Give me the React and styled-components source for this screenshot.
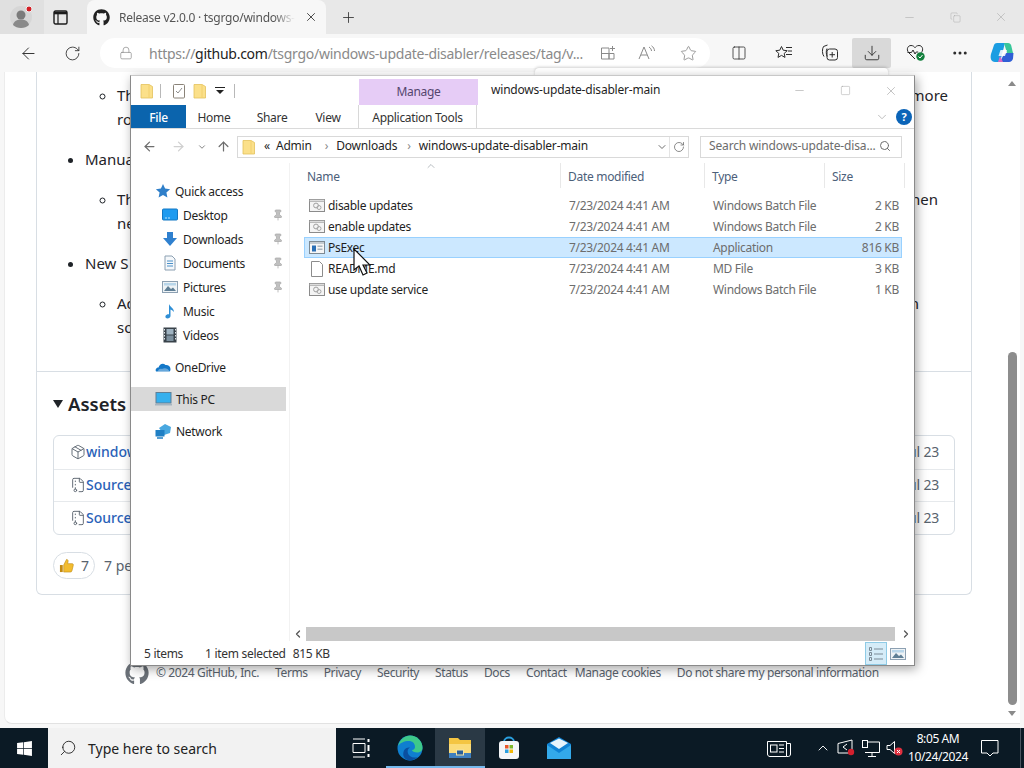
import React from "react";
import styled, { createGlobalStyle } from "styled-components";
import { FaGithub, FaWindows } from "react-icons/fa";
import {
  ArrowLeft,
  ArrowRight,
  ArrowUp,
  ChevronDown,
  ChevronLeft,
  ChevronRight,
  ChevronUp,
  Columns2,
  Lock,
  Minus,
  MoreHorizontal,
  Pin,
  Plus,
  RotateCw,
  Search,
  Square,
  Star,
  X,
  Copy,
  Download,
  Package,
  FileArchive,
} from "lucide-react";

const UI_FONT = `"Noto Sans", "Open Sans", sans-serif`;

const GlobalStyle = createGlobalStyle`
  html, body { margin: 0; padding: 0; background: #f7f7f7; }
  * { box-sizing: border-box; }
  body { font-family: ${UI_FONT}; overflow: hidden; }
`;

/* ---------- drawn icons ---------- */

const FolderIcon = ({ size = 16 }) => (
  <svg width={size} height={size} viewBox="0 0 16 16">
    <path d="M2 1.5h8l3.5 2V15H2z" fill="#fbe08a" stroke="#e3c25c" strokeWidth="0.8" />
    <path d="M10 1.5V15" stroke="#f2d06e" strokeWidth="1" />
  </svg>
);

const CheckDocIcon = () => (
  <svg width="16" height="16" viewBox="0 0 16 16" fill="none">
    <rect x="2.5" y="1.5" width="11" height="13.5" rx="1" stroke="#8a8378" />
    <path d="M5 8l2 2 4-5" stroke="#8f8f8f" />
  </svg>
);

const BatchIcon = () => (
  <svg width="16" height="13" viewBox="0 0 16 13" fill="none">
    <rect x="0.5" y="0.5" width="15" height="12" fill="#f4f4f4" stroke="#8b8b8b" />
    <rect x="0.5" y="0.5" width="15" height="2" fill="#dcdcdc" stroke="#8b8b8b" strokeWidth="0.5" />
    <circle cx="7" cy="6.5" r="2.4" stroke="#a0a0a0" />
    <circle cx="10" cy="8.5" r="2" stroke="#a8a8a8" />
  </svg>
);

const AppIcon = () => (
  <svg width="16" height="13" viewBox="0 0 16 13">
    <rect x="0.5" y="0.5" width="15" height="12" fill="#f6f6f6" stroke="#7d8a94" />
    <rect x="1" y="1" width="14" height="2" fill="#c4ccd2" />
    <rect x="3" y="4.5" width="4" height="6" fill="#2a6fb5" />
    <rect x="8.5" y="4.5" width="5" height="1.5" fill="#a9b6c0" />
    <rect x="8.5" y="7.5" width="5" height="1.5" fill="#a9b6c0" />
  </svg>
);

const PageIcon = () => (
  <svg width="14" height="16" viewBox="0 0 14 16" fill="#fff" stroke="#8c8c8c">
    <path d="M1.5.5h8l3 3v12h-11z" />
  </svg>
);

const QuickAccessIcon = () => (
  <svg width="16" height="16" viewBox="0 0 16 16">
    <path d="M8 1l2.1 4.6 5 .6-3.7 3.4 1 5L8 12.100l-4.400 2.500 1-5L.9 6.200l5-.6z" fill="#2f7fc9" />
  </svg>
);

const DesktopIcon = () => (
  <svg width="16" height="16" viewBox="0 0 16 16">
    <rect x="0.5" y="2" width="15" height="11" rx="1" fill="#1e9bf0" stroke="#1378c4" />
    <path d="M3 11h2m1 0h2" stroke="#bfe4fb" />
  </svg>
);

const DownloadsIcon = () => (
  <svg width="16" height="16" viewBox="0 0 16 16">
    <path d="M5 1h6v6h4l-7 8-7-8h4z" fill="#2f80cf" />
  </svg>
);

const DocumentsIcon = () => (
  <svg width="16" height="16" viewBox="0 0 16 16" fill="none">
    <path d="M3 1h7l3 3v11H3z" fill="#f5f8fb" stroke="#8ca0b2" />
    <path d="M5 6h6M5 8.500h6M5 11h6" stroke="#4a90c8" />
  </svg>
);

const PicturesIcon = () => (
  <svg width="16" height="16" viewBox="0 0 16 16">
    <rect x="0.5" y="2.500" width="15" height="11" fill="#eef3f6" stroke="#8ca0b2" />
    <path d="M2 12l4-5 3 3 2-1.500 3 3.500z" fill="#5f7f96" />
    <rect x="2" y="4" width="12" height="2.500" fill="#b8d6ea" />
  </svg>
);

const MusicIcon = () => (
  <svg width="16" height="16" viewBox="0 0 16 16">
    <path d="M7 1c1 3 5 4 5 8-1-1-2-2-3.500-2.500V13c0 1.600-1.500 2.500-3 2.500S3 14.500 3.500 13 6 11 7 11.300z" fill="#2f8fd6" />
  </svg>
);

const VideosIcon = () => (
  <svg width="16" height="16" viewBox="0 0 16 16">
    <rect x="1.500" y="0.500" width="13" height="15" fill="#39424a" />
    <rect x="4.500" y="2" width="7" height="5.500" fill="#9fb3c1" />
    <rect x="4.500" y="8.500" width="7" height="5.500" fill="#7d909e" />
    <path d="M2.500 2v12M13.500 2v12" stroke="#dfe5e9" strokeDasharray="1.500 1.500" />
  </svg>
);

const OneDriveIcon = () => (
  <svg width="16" height="16" viewBox="0 0 16 16">
    <path d="M1 12.500c-1-2 .5-4 2.500-4C4.500 5 8 3.500 10.500 6c2-.5 5 1 5 4 0 1.500-.5 2.500-1 2.500z" fill="#1478c8" />
    <path d="M3 12.500c0-2 2-3.500 4-2.500 1.500-1 6-1.500 7.500 2.500z" fill="#fff" opacity="0.35" />
  </svg>
);

const ThisPcIcon = () => (
  <svg width="17" height="16" viewBox="0 0 17 16">
    <rect x="1" y="1.500" width="15" height="10.500" fill="#35b0ee" stroke="#5f7f96" />
    <path d="M0 13h17v1.500H0z" fill="#a6b4bf" />
  </svg>
);

const NetworkIcon = () => (
  <svg width="17" height="16" viewBox="0 0 17 16">
    <path d="M4 5l6-4 6 3-1 6-6 2z" fill="#49a8e0" />
    <rect x="0.500" y="7" width="9" height="6.500" fill="#1f7fc4" />
    <path d="M2 15h6" stroke="#1f7fc4" strokeWidth="1.500" />
  </svg>
);

const NAV_ICONS = {
  quick: QuickAccessIcon,
  desktop: DesktopIcon,
  downloads: DownloadsIcon,
  documents: DocumentsIcon,
  pictures: PicturesIcon,
  music: MusicIcon,
  videos: VideosIcon,
  onedrive: OneDriveIcon,
  pc: ThisPcIcon,
  network: NetworkIcon,
};

const FILE_ICONS = { batch: BatchIcon, app: AppIcon, page: PageIcon };

const ThumbIcon = () => (
  <svg width="15" height="15" viewBox="0 0 16 16">
    <path d="M1 7.500h3V15H1z" fill="#c28a12" />
    <path d="M5 7.500L8 1.500c1.600 0 2 1.200 1.600 2.700L9.200 6H14c1.200 0 1.500 1 1.200 2l-1.400 5.700c-.2.900-.8 1.300-1.700 1.300H5z" fill="#f2bc2f" stroke="#b9860f" strokeWidth="0.600" />
  </svg>
);

const ProfileIcon = () => (
  <svg width="24" height="26" viewBox="0 0 24 26">
    <circle cx="11" cy="13" r="11" fill="#d6d6d6" />
    <circle cx="11" cy="11" r="4.500" fill="#7b7b7b" />
    <path d="M3 21c1-4 4-5.500 8-5.500s7 1.500 8 5.500c-2 2-5 3-8 3s-6-1-8-3z" fill="#8a8a8a" />
    <circle cx="19" cy="5" r="3" fill="#d41f26" stroke="#f0f0f0" />
  </svg>
);

const TabActionsIcon = () => (
  <svg width="15" height="15" viewBox="0 0 15 15" fill="none" stroke="#1c1c1c">
    <rect x="1" y="1" width="13" height="13" rx="1.500" strokeWidth="1.400" />
    <path d="M1 3h13" strokeWidth="2.600" />
    <path d="M5 4v10" strokeWidth="1.200" />
  </svg>
);

const SplitAddIcon = () => (
  <svg width="16" height="16" viewBox="0 0 16 16" fill="none" stroke="#8a8a8a">
    <path d="M1.500 3h7.500v11h-7.500zM9 8.500H1.500M9 8.500h5V14H9z" />
    <path d="M12.500 1v5M10 3.500h5" />
  </svg>
);

const ReadAloudIcon = () => (
  <svg width="20" height="16" viewBox="0 0 20 16" fill="none" stroke="#8a8a8a">
    <path d="M1 14L6 2l5 12M3 10h6" />
    <path d="M11 2c1.500 1 2.500 2.500 2.500 4M13.500 .800c1.800 1.200 3 3 3 5.200" />
  </svg>
);

const FavoritesIcon = () => (
  <svg width="18" height="16" viewBox="0 0 18 16" fill="none" stroke="#2c2c2c">
    <path d="M6.500 1.500l1.700 3.700 4 .5-3 2.700.8 4-3.500-2-3.500 2 .8-4-3-2.700 4-.5z" />
    <path d="M11 2.500h6M13 6h4M11 9.500h6" />
  </svg>
);

const CollectionsIcon = () => (
  <svg width="18" height="18" viewBox="0 0 18 18" fill="none" stroke="#2c2c2c">
    <path d="M3 12.500C1 10 1 5 2.500 2.500l4-1.500M6 4.500c-1 2-1 6 .200 8" />
    <rect x="6" y="5" width="10.500" height="11" rx="2.500" />
    <path d="M11.200 8v5.500M8.500 10.700H14" />
  </svg>
);

const HealthIcon = () => (
  <svg width="20" height="18" viewBox="0 0 20 18" fill="none">
    <path d="M9 15L2.500 8.500C0 5 2 1.500 5 1.500c2 0 3.200 1 4 2.200.8-1.200 2-2.200 4-2.200 3 0 5 3.500 2.500 7" stroke="#2c2c2c" />
    <path d="M1.500 8.500h4L7 6l2 4 1.200-2h2" stroke="#2c2c2c" />
    <circle cx="14.500" cy="12.500" r="4.200" fill="#13803d" />
    <path d="M12.500 12.500l1.500 1.500 2.500-3" stroke="#fff" />
  </svg>
);

const CopilotIcon = () => (
  <svg width="24" height="24" viewBox="0 0 24 24">
    <path d="M7 2h8l-5 19H5C1 21 0 17 1 13L4 4c.4-1.300 1.600-2 3-2z" fill="#1b9de2" />
    <path d="M14 2h4c1.700 0 2.800 1 3.200 2.500L23 12h-6z" fill="#38c79a" />
    <path d="M10 21h9c2 0 3.500-1.300 4-3.500L23.500 12H17c-2 0-3.300 1.200-4 3z" fill="#2f5fd6" />
    <path d="M8 21l2-6 3 6z" fill="#d96ac4" />
    <path d="M10.500 9H17l-2 6H8.500z" fill="#fff" opacity="0.85" />
  </svg>
);

const TaskViewIcon = () => (
  <svg width="20" height="20" viewBox="0 0 20 20" fill="none" stroke="#fff">
    <path d="M2 1h12M2 19h12M2 5.500h12v9H2z" />
    <path d="M17.500 1v3M17.500 7v6M17.500 16v3" strokeWidth="2" />
  </svg>
);

const EdgeIcon = () => (
  <svg width="26" height="26" viewBox="0 0 26 26">
    <circle cx="13" cy="13" r="12.500" fill="#0f7fd0" />
    <path d="M1 11C3 4 8 .5 13 .5 20 .5 25.500 6 25.500 13c0 3-2.500 4.500-5.500 4.500-2.500 0-5-1-5-2.500 2 0 3-1.500 3-3C18 8 15 6 12 6 7 6 3 8 1 11z" fill="#3ec98a" />
    <path d="M12.500 25.500C7 25 5 20 7 15.500c1-2.500 4-3.500 6-3 -2 1-3 3-2 6 1 3 5 5 9.500 3.500-2 2.300-5 3.500-8 3.500z" fill="#0a4fa0" />
  </svg>
);

const ExplorerIcon = () => (
  <svg width="24" height="22" viewBox="0 0 24 22">
    <path d="M1 1h9l2 2h11v17H1z" fill="#f4c542" />
    <rect x="1" y="7" width="22" height="14" fill="#fbdc7a" />
    <rect x="1" y="16" width="22" height="5" fill="#3f7fbf" />
    <rect x="8.500" y="13" width="7" height="5" fill="#2a5f9a" stroke="#f6e3a1" />
  </svg>
);

const StoreIcon = () => (
  <svg width="24" height="24" viewBox="0 0 24 24">
    <path d="M7 6c0-6 10-6 10 0" fill="none" stroke="#2aa0e0" strokeWidth="1.800" />
    <rect x="2" y="5" width="20" height="18" rx="3" fill="#f4f6f8" />
    <rect x="8" y="9" width="3.500" height="3.500" fill="#e8562a" />
    <rect x="12.500" y="9" width="3.500" height="3.500" fill="#7eb82b" />
    <rect x="8" y="13.500" width="3.500" height="3.500" fill="#2b9fe0" />
    <rect x="12.500" y="13.500" width="3.500" height="3.500" fill="#f2b705" />
  </svg>
);

const MailIcon = () => (
  <svg width="26" height="24" viewBox="0 0 26 24">
    <path d="M1 8L13 1l12 7v15H1z" fill="#0f82d4" />
    <path d="M1 9l12 8 12-8v14H1z" fill="#33a9ea" />
    <path d="M4 7l9-4.500L22 7l-9 6z" fill="#e6f4fc" />
  </svg>
);

const NewsIcon = () => (
  <svg width="24" height="18" viewBox="0 0 24 18" fill="none" stroke="#fff">
    <path d="M.5 2.500h19v15H3c-1.500 0-2.500-1-2.500-2.500z" />
    <path d="M19.500 4.500h4V15c0 1.500-1 2.500-2 2.500h-2" />
    <rect x="3.500" y="6" width="6.500" height="7" />
    <path d="M12 6h5M12 9.500h5M12 13h5" />
  </svg>
);

const RemoteIcon = () => (
  <svg width="20" height="18" viewBox="0 0 20 18" fill="none" stroke="#fff">
    <path d="M1 4.500l14-3.500v13H1z" />
    <path d="M10 5L6 8l4 3" />
    <circle cx="14" cy="13" r="3.200" fill="#d3202e" stroke="none" />
  </svg>
);

const NetworkTrayIcon = () => (
  <svg width="18" height="17" viewBox="0 0 18 17" fill="none" stroke="#fff">
    <path d="M4 2h13.500v10.500H3" />
    <rect x=".5" y=".5" width="5" height="7" fill="#0b1a25" />
    <path d="M10 12.500v3.500M6 16.500h8" />
  </svg>
);

const VolumeIcon = () => (
  <svg width="18" height="17" viewBox="0 0 18 17" fill="none" stroke="#fff">
    <path d="M1 5.500h3L8.500 1.500v12L4 9.500H1z" />
    <circle cx="12.500" cy="11.500" r="4" fill="#e0303f" stroke="none" />
    <path d="M11 10l3 3m0-3l-3 3" stroke="#fff" />
  </svg>
);

const BubbleIcon = () => (
  <svg width="18" height="17" viewBox="0 0 18 17" fill="none" stroke="#fff">
    <path d="M.5.5h16.500v12.500h-5l-3 3-3-3H.5z" />
  </svg>
);

const DetailsViewIcon = () => (
  <svg width="16" height="16" viewBox="0 0 16 16" stroke="#7b8a96" strokeWidth="1" fill="none">
    <path d="M1.500 1.500h2v3h-2zM1.500 6.500h2v3h-2zM1.500 11.500h2v3h-2zM6 3h9M6 8h9M6 13h9" />
  </svg>
);

const Cursor = styled.svg`
  position: absolute;
  left: 353px;
  top: 248px;
  z-index: 5;
`;

/* ---------- browser chrome ---------- */

const Shell = styled.div`
  position: relative;
  width: 1024px;
  height: 768px;
  display: flex;
  flex-direction: column;
  overflow: hidden;
  background: #f7f7f7;
`;

const TabStrip = styled.div`
  height: 34px;
  flex: none;
  display: flex;
  align-items: stretch;
  background: #e8e8e8;
`;

const ProfileSlot = styled.div`
  width: 44px;
  display: flex;
  align-items: center;
  justify-content: center;
  background: #e0e0e0;
`;

const TabActions = styled.div`
  width: 43px;
  display: flex;
  align-items: center;
  padding-left: 9px;
`;

const Tab = styled.div`
  width: 239px;
  display: flex;
  align-items: center;
  padding: 0 8px 0 6px;
  gap: 9px;
  background: #f7f7f7;
  border-radius: 8px 8px 0 0;
  color: #333;
`;

const TabTitle = styled.span`
  flex: 1;
  min-width: 0;
  white-space: nowrap;
  font-size: 12px;
  letter-spacing: -0.25px;
  color: #555;
  -webkit-mask-image: linear-gradient(to right, #000 88%, transparent);
  mask-image: linear-gradient(to right, #000 88%, transparent);
`;

const NewTab = styled.div`
  width: 44px;
  display: flex;
  align-items: center;
  justify-content: center;
  color: #333;
`;

const BrowserControls = styled.div`
  margin-left: auto;
  display: flex;
`;

const BrowserControl = styled.div`
  width: 46px;
  display: flex;
  align-items: center;
  justify-content: center;
  color: #a8a8a8;
`;

const Toolbar = styled.div`
  height: 38px;
  flex: none;
  display: flex;
  align-items: center;
  background: #f7f7f7;
`;

const ToolButton = styled.div`
  width: ${(p) => p.$w || 44}px;
  height: 30px;
  flex: none;
  display: flex;
  align-items: center;
  justify-content: center;
  color: ${(p) => p.$color || "#2c2c2c"};
  background: ${(p) => (p.$active ? "#d9d9d9" : "transparent")};
  border-radius: 2px;
`;

const AddressBar = styled.div`
  width: 610px;
  height: 30px;
  flex: none;
  margin-left: 12px;
  display: flex;
  align-items: center;
  padding-left: 19px;
  background: #fff;
  border-radius: 15px;
  color: #8a8a8a;
`;

const Url = styled.span`
  width: 430px;
  margin-left: 16px;
  font-size: 14px;
  letter-spacing: -0.27px;
  color: #8a8a8a;
  white-space: nowrap;

  b {
    font-weight: 400;
    color: #222;
  }
`;

const AddressActions = styled.div`
  margin-left: 9px;
  display: flex;
`;

const ToolGroup = styled.div`
  margin-left: 7px;
  display: flex;
`;

const DownloadPopup = styled.div`
  position: absolute;
  left: 535px;
  top: 68px;
  width: 353px;
  height: 10px;
  background: #fff;
  border-radius: 4px 4px 0 0;
  box-shadow: 0 -1px 3px rgba(0, 0, 0, 0.18);
`;

/* ---------- page behind the window ---------- */

const PageFrame = styled.div`
  flex: 1;
  min-height: 0;
  margin: 0 4px 4px;
  display: flex;
  background: #fff;
  border-bottom: 1px solid #e2e2e2;
  border-left: 1px solid #ececec;
  border-radius: 0 0 0 8px;
`;

const PageBody = styled.div`
  flex: 1;
  min-width: 0;
  overflow: hidden;
  padding-left: 31px;
`;

const Card = styled.div`
  width: 936px;
  height: 523px;
  margin-bottom: 66px;
  border: 1px solid #d8dee4;
  border-top: none;
  border-radius: 0 0 6px 6px;
  padding-top: 11px;
  font-size: 15px;
  line-height: 24px;
  color: #1f2328;
`;

const List = styled.ul`
  margin: 0;
  padding-left: ${(p) => (p.$nested ? 32 : 48)}px;
  list-style: ${(p) => (p.$nested ? "circle" : "disc")};
`;

const Bullet = styled.li`
  margin-top: ${(p) => (p.$first ? 0 : 16)}px;
  list-style: ${(p) => (p.$plain ? "none" : "inherit")};
`;

const Line = styled.div`
  width: ${(p) => p.$width}px;
  display: flex;
  justify-content: space-between;
`;

const Divider = styled.hr`
  height: 1px;
  margin: 32px 0 0;
  border: none;
  background: #d8dee4;
`;

const Section = styled.div`
  padding: 19px 16px 0;
`;

const SectionTitle = styled.h2`
  margin: 0;
  display: flex;
  align-items: center;
  gap: 5px;
  font-size: 18.5px;
  line-height: 26px;
  font-weight: 600;
  color: #1f2328;

  &::before {
    content: "";
    border-left: 5px solid transparent;
    border-right: 5px solid transparent;
    border-top: 8px solid #1f2328;
  }
`;

const AssetBox = styled.div`
  margin-top: 18px;
  height: 100px;
  display: grid;
  grid-template-rows: repeat(3, 1fr);
  border: 1px solid #d8dee4;
  border-radius: 6px;
`;

const AssetRow = styled.div`
  display: flex;
  align-items: center;
  justify-content: space-between;
  padding: 0 15px 0 16px;
  border-top: ${(p) => (p.$first ? "none" : "1px solid #e6e9ec")};
`;

const AssetName = styled.span`
  display: flex;
  align-items: center;
  font-size: 14px;
  font-weight: 500;
  color: #2a62b8;

  svg {
    color: #59636e;
  }
`;

const AssetDate = styled.span`
  font-size: 14px;
  letter-spacing: -0.2px;
  color: #59636e;
`;

const ReactionRow = styled.div`
  margin-top: 17px;
  display: flex;
  align-items: center;
  gap: 9px;
  font-size: 14px;
  color: #59636e;
`;

const ReactionPill = styled.span`
  width: 42px;
  height: 27px;
  display: flex;
  align-items: center;
  gap: 7px;
  padding-left: 5px;
  border: 1px solid #d8dee4;
  border-radius: 14px;
`;

const Footer = styled.div`
  display: flex;
  align-items: center;
  height: 24px;
  margin-left: 89px;
  font-size: 12px;
  letter-spacing: -0.38px;
  line-height: 16px;
  color: #59636e;
  white-space: nowrap;
`;

const FooterLogo = styled.span`
  width: 31px;
  display: flex;
  color: #6b7178;
`;

const Spaced = styled.span`
  margin-left: ${(p) => p.$gap ?? 16}px;
`;

const PageScroll = styled.div`
  width: 16px;
  flex: none;
  display: flex;
  flex-direction: column;
  align-items: center;
  padding-top: 9px;
  color: #8a8a8a;
`;

const ScrollThumb = styled.div`
  flex: 1;
  width: 9px;
  margin-top: 266px;
  margin-bottom: 6px;
  background: #8d8d8d;
  border-radius: 5px;
`;

const Arrow = styled.span`
  width: 0;
  height: 0;
  border-left: 4px solid transparent;
  border-right: 4px solid transparent;
  border-bottom: ${(p) => (p.$down ? "none" : "5px solid #8a8a8a")};
  border-top: ${(p) => (p.$down ? "5px solid #8a8a8a" : "none")};
  margin-bottom: ${(p) => (p.$down ? 7 : 0)}px;
`;

/* ---------- explorer window ---------- */

const Window = styled.div`
  position: absolute;
  left: 130px;
  top: 75px;
  width: 785px;
  height: 591px;
  display: flex;
  flex-direction: column;
  background: #fff;
  border: 1px solid #8a8a8a;
  border-top-color: #c8c8c8;
  box-shadow: 2px 3px 10px rgba(0, 0, 0, 0.35);
  font-size: 12px;
  color: #1f1f1f;
  letter-spacing: -0.3px;
`;

const TitleRow = styled.div`
  height: 29px;
  flex: none;
  display: flex;
  align-items: flex-end;
`;

const QuickBar = styled.div`
  width: 228px;
  height: 29px;
  display: flex;
  align-items: center;
  padding-left: 8px;
  gap: 5px;
`;

const QuickSep = styled.span`
  width: 1px;
  height: 14px;
  margin-right: ${(p) => p.$mr || 0}px;
  background: #b8b8b8;
`;

const QuickDrop = styled.span`
  width: 10px;
  height: 8px;
  border-top: 1px solid #222;
  position: relative;
  margin: 0 4px 0 2px;

  &::after {
    content: "";
    position: absolute;
    left: 1px;
    top: 2px;
    border-left: 4px solid transparent;
    border-right: 4px solid transparent;
    border-top: 4px solid #222;
  }
`;

const ManageTab = styled.div`
  width: 119px;
  height: 26px;
  padding-bottom: 2px;
  display: flex;
  align-items: center;
  justify-content: center;
  background: #e6ccf6;
  color: #54466e;
`;

const WindowTitle = styled.div`
  margin-left: 13px;
  height: 29px;
  line-height: 27px;
  letter-spacing: -0.2px;
`;

const WindowControls = styled.div`
  margin-left: auto;
  height: 29px;
  display: flex;
`;

const WindowControl = styled.div`
  width: 46px;
  display: flex;
  align-items: center;
  justify-content: center;
  color: #9a9a9a;
`;

const RibbonRow = styled.div`
  height: 24px;
  flex: none;
  display: flex;
  align-items: stretch;
  border-bottom: 1px solid #dadada;
`;

const RibbonTab = styled.div`
  width: ${(p) => p.$w}px;
  padding-top: 2px;
  display: flex;
  align-items: center;
  justify-content: center;
  color: #333;
`;

const FileTab = styled(RibbonTab)`
  background: #0b64ad;
  color: #fff;
  font-weight: 500;
`;

const ContextTab = styled(RibbonTab)`
  margin-left: 4px;
  border-left: 1px solid #d8d8d8;
  border-right: 1px solid #d8d8d8;
`;

const RibbonEnd = styled.div`
  margin-left: auto;
  display: flex;
  align-items: center;
  gap: 7px;
  padding-right: 2px;
  color: #b0b0b0;
`;

const HelpBadge = styled.span`
  width: 16px;
  height: 16px;
  display: flex;
  align-items: center;
  justify-content: center;
  border-radius: 50%;
  background: #0b64b8;
  color: #fff;
  font-size: 11px;
  font-weight: 700;
`;

const AddressRow = styled.div`
  height: 34px;
  flex: none;
  display: flex;
  align-items: center;
  padding-top: 1px;
`;

const NavArrows = styled.div`
  width: 106px;
  display: grid;
  grid-template-columns: 36px 22px 26px 16px;
  justify-items: center;
  align-items: center;
`;

const NavArrow = styled.span`
  display: flex;
  color: ${(p) => (p.$off ? "#d0d0d0" : "#6e6e6e")};
`;

const PathBox = styled.div`
  width: 452px;
  height: 22px;
  display: flex;
  align-items: center;
  padding-left: 3px;
  border: 1px solid #d9d9d9;
`;

const Crumb = styled.span`
  margin-left: ${(p) => p.$ml}px;
  padding-bottom: 2px;
  white-space: nowrap;
  letter-spacing: -0.2px;
`;

const Sep = styled(Crumb)`
  color: #8a8a8a;
`;

const PathEnd = styled.div`
  margin-left: auto;
  height: 100%;
  display: flex;
  align-items: center;
  color: #6e6e6e;
`;

const PathDrop = styled.span`
  width: 15px;
  height: 100%;
  display: flex;
  align-items: center;
  justify-content: center;
  border-right: 1px solid #e4e4e4;
`;

const PathRefresh = styled.span`
  width: 18px;
  display: flex;
  justify-content: center;
`;

const SearchBox = styled.div`
  width: 202px;
  height: 22px;
  margin-left: 11px;
  padding: 0 10px 2px 8px;
  display: flex;
  align-items: center;
  justify-content: space-between;
  border: 1px solid #d9d9d9;
  color: #6d6d6d;
  white-space: nowrap;
  letter-spacing: -0.15px;
`;

const Body = styled.div`
  flex: 1;
  min-height: 0;
  display: grid;
  grid-template-columns: 159px 1fr;
`;

const NavPane = styled.div`
  padding-top: 16px;
  border-right: 1px solid #f2f2f2;
`;

const NavGroup = styled.div`
  margin-bottom: 8px;
`;

const NavRow = styled.div`
  width: 155px;
  height: 24px;
  display: flex;
  align-items: center;
  padding-left: ${(p) => (p.$sub ? 31 : 24)}px;
  gap: ${(p) => (p.$sub ? 5 : 4)}px;
  background: ${(p) => (p.$selected ? "#d9d9d9" : "transparent")};
`;

const NavPin = styled.span`
  margin-left: auto;
  margin-right: 2px;
  display: flex;
  color: #a8a8a8;
`;

const FilePane = styled.div`
  min-width: 0;
  display: flex;
  flex-direction: column;
  padding-left: 14px;
`;

const HeaderRow = styled.div`
  height: 25px;
  flex: none;
  position: relative;
  display: grid;
  grid-template-columns: 257px 144px 120px 80px;
`;

const HeaderCell = styled.div`
  display: flex;
  align-items: center;
  padding-left: ${(p) => p.$pl || 7}px;
  padding-top: 2px;
  border-right: 1px solid #e8e8e8;
  color: #4c607a;
`;

const SortCaret = styled.span`
  position: absolute;
  left: 121px;
  top: -3px;
  display: flex;
  color: #9aa0a6;
`;

const Rows = styled.div`
  margin-top: 7px;
  flex: 1;
`;

const FileRow = styled.div`
  width: 598px;
  height: 21px;
  display: grid;
  grid-template-columns: 264px 144px 100px 86px;
  align-items: center;
  border: 1px solid ${(p) => (p.$selected ? "#99d1ff" : "transparent")};
  background: ${(p) => (p.$selected ? "#cce8ff" : "transparent")};
`;

const FileName = styled.span`
  display: flex;
  align-items: center;
  gap: 3px;
  padding-left: 4px;
  white-space: nowrap;
`;

const FileIconSlot = styled.span`
  width: 16px;
  display: flex;
  justify-content: center;
`;

const Muted = styled.span`
  color: #6d6d6d;
  white-space: nowrap;
`;

const SizeCell = styled(Muted)`
  text-align: right;
`;

const HScroll = styled.div`
  height: 14px;
  flex: none;
  display: flex;
  align-items: center;
  margin-left: -14px;
  padding: 0 2px;
  color: #555;
`;

const HThumb = styled.div`
  flex: 1;
  height: 14px;
  margin: 0 5px 0 2px;
  background: #c8c8c8;
`;

const StatusBar = styled.div`
  height: 24px;
  flex: none;
  display: flex;
  align-items: center;
  padding: 1px 0 0 13px;
  white-space: nowrap;
  color: #333;
`;

const ViewToggles = styled.div`
  margin-left: auto;
  height: 100%;
  display: flex;
  align-items: center;
  padding-right: 5px;
`;

const ViewToggle = styled.span`
  width: 22px;
  height: 100%;
  display: flex;
  align-items: center;
  justify-content: center;
  background: ${(p) => (p.$active ? "#d5ecf8" : "transparent")};
  border: 1px solid ${(p) => (p.$active ? "#8fcbe6" : "transparent")};
`;

/* ---------- taskbar ---------- */

const Taskbar = styled.div`
  height: 40px;
  flex: none;
  display: flex;
  align-items: stretch;
  background: #0b1a25;
  color: #fff;
`;

const StartButton = styled.div`
  width: 48px;
  display: flex;
  align-items: center;
  justify-content: center;
`;

const TaskSearch = styled.div`
  width: 288px;
  display: flex;
  align-items: center;
  gap: 11px;
  padding-left: 11px;
  background: #f2f2f2;
  color: #222;
  font-size: 14px;
`;

const MirroredSearch = styled(Search)`
  transform: scaleX(-1);
`;

const TaskSlot = styled.div`
  width: 49.5px;
  display: flex;
  align-items: center;
  justify-content: center;
  background: ${(p) => (p.$active ? "#2a3945" : "transparent")};
  box-shadow: ${(p) => (p.$running ? "inset 0 -2px 0 #76b9ed" : "none")};
`;

const Tray = styled.div`
  margin-left: auto;
  display: flex;
  align-items: stretch;
`;

const NewsSlot = styled.div`
  width: 40px;
  margin-right: 12px;
  display: flex;
  align-items: center;
  justify-content: center;
`;

const TraySlot = styled.div`
  width: 24px;
  display: flex;
  align-items: center;
  justify-content: center;
`;

const Clock = styled.div`
  width: 62px;
  display: flex;
  flex-direction: column;
  align-items: center;
  justify-content: center;
  font-size: 12px;
  letter-spacing: -0.4px;
  line-height: 18px;
  white-space: nowrap;
`;

const NotifySlot = styled.div`
  width: 42px;
  display: flex;
  align-items: center;
  justify-content: center;
`;

const ShowDesktop = styled.div`
  width: 4px;
  margin-left: 9px;
  border-left: 1px solid #4a5560;
`;

/* ---------- data ---------- */

const NAV_GROUPS = [
  [
    { id: "quick", label: "Quick access" },
    { id: "desktop", label: "Desktop", sub: true, pin: true },
    { id: "downloads", label: "Downloads", sub: true, pin: true },
    { id: "documents", label: "Documents", sub: true, pin: true },
    { id: "pictures", label: "Pictures", sub: true, pin: true },
    { id: "music", label: "Music", sub: true },
    { id: "videos", label: "Videos", sub: true },
  ],
  [{ id: "onedrive", label: "OneDrive" }],
  [{ id: "pc", label: "This PC", selected: true }],
  [{ id: "network", label: "Network" }],
];

const FILES = [
  { name: "disable updates", icon: "batch", type: "Windows Batch File", size: "2 KB" },
  { name: "enable updates", icon: "batch", type: "Windows Batch File", size: "2 KB" },
  { name: "PsExec", icon: "app", type: "Application", size: "816 KB", selected: true },
  { name: "README.md", icon: "page", type: "MD File", size: "3 KB" },
  { name: "use update service", icon: "batch", type: "Windows Batch File", size: "1 KB" },
];

const ASSETS = [
  { name: "windows-update-disabler.zip", Icon: Package },
  { name: "Source code (zip)", Icon: FileArchive },
  { name: "Source code (tar.gz)", Icon: FileArchive },
];

const FOOTER_LINKS = [
  ["Terms", 16],
  ["Privacy", 16],
  ["Security", 16],
  ["Status", 16],
  ["Docs", 16],
  ["Contact", 16],
  ["Manage cookies", 8],
  ["Do not share my personal information", 16],
];

const Explorer = () => (
  <Window>
    <TitleRow>
      <QuickBar>
        <FolderIcon />
        <QuickSep $mr={5} />
        <CheckDocIcon />
        <FolderIcon />
        <QuickDrop />
        <QuickSep />
      </QuickBar>
      <ManageTab>Manage</ManageTab>
      <WindowTitle>windows-update-disabler-main</WindowTitle>
      <WindowControls>
        <WindowControl><Minus size={13} strokeWidth={1} /></WindowControl>
        <WindowControl><Square size={11} strokeWidth={1} /></WindowControl>
        <WindowControl><X size={14} strokeWidth={1} /></WindowControl>
      </WindowControls>
    </TitleRow>
    <RibbonRow>
      <FileTab $w={55}>File</FileTab>
      <RibbonTab $w={56}>Home</RibbonTab>
      <RibbonTab $w={60}>Share</RibbonTab>
      <RibbonTab $w={52}>View</RibbonTab>
      <ContextTab $w={119}>Application Tools</ContextTab>
      <RibbonEnd>
        <ChevronDown size={14} strokeWidth={1.4} />
        <HelpBadge>?</HelpBadge>
      </RibbonEnd>
    </RibbonRow>
    <AddressRow>
      <NavArrows>
        <NavArrow><ArrowLeft size={15} strokeWidth={2} /></NavArrow>
        <NavArrow $off><ArrowRight size={15} strokeWidth={2} /></NavArrow>
        <NavArrow><ChevronDown size={10} strokeWidth={2} /></NavArrow>
        <NavArrow><ArrowUp size={15} strokeWidth={2} /></NavArrow>
      </NavArrows>
      <PathBox>
        <FolderIcon />
        <Crumb $ml={7}>«</Crumb>
        <Crumb $ml={6}>Admin</Crumb>
        <Sep $ml={13}>›</Sep>
        <Crumb $ml={8}>Downloads</Crumb>
        <Sep $ml={10}>›</Sep>
        <Crumb $ml={8}>windows-update-disabler-main</Crumb>
        <PathEnd>
          <PathDrop><ChevronDown size={12} strokeWidth={2} /></PathDrop>
          <PathRefresh><RotateCw size={12} strokeWidth={1.6} /></PathRefresh>
        </PathEnd>
      </PathBox>
      <SearchBox>
        Search windows-update-disa...
        <Search size={12} strokeWidth={2} />
      </SearchBox>
    </AddressRow>
    <Body>
      <NavPane>
        {NAV_GROUPS.map((group) => (
          <NavGroup key={group[0].id}>
            {group.map((item) => {
              const Icon = NAV_ICONS[item.id];
              return (
                <NavRow key={item.id} $sub={item.sub} $selected={item.selected}>
                  <Icon />
                  {item.label}
                  {item.pin && (
                    <NavPin><Pin size={12} strokeWidth={1.5} fill="#c0c0c0" /></NavPin>
                  )}
                </NavRow>
              );
            })}
          </NavGroup>
        ))}
      </NavPane>
      <FilePane>
        <HeaderRow>
          <SortCaret><ChevronUp size={12} strokeWidth={1.4} /></SortCaret>
          <HeaderCell $pl={3}>Name</HeaderCell>
          <HeaderCell>Date modified</HeaderCell>
          <HeaderCell>Type</HeaderCell>
          <HeaderCell>Size</HeaderCell>
        </HeaderRow>
        <Rows>
          {FILES.map((file) => {
            const Icon = FILE_ICONS[file.icon];
            return (
              <FileRow key={file.name} $selected={file.selected}>
                <FileName>
                  <FileIconSlot><Icon /></FileIconSlot>
                  {file.name}
                </FileName>
                <Muted>7/23/2024 4:41 AM</Muted>
                <Muted>{file.type}</Muted>
                <SizeCell>{file.size}</SizeCell>
              </FileRow>
            );
          })}
        </Rows>
        <HScroll>
          <ChevronLeft size={12} strokeWidth={2.5} />
          <HThumb />
          <ChevronRight size={12} strokeWidth={2.5} />
        </HScroll>
      </FilePane>
    </Body>
    <StatusBar>
      5 items
      <Spaced $gap={22}>1 item selected</Spaced>
      <Spaced $gap={7}>815 KB</Spaced>
      <ViewToggles>
        <ViewToggle $active><DetailsViewIcon /></ViewToggle>
        <ViewToggle><PicturesIcon /></ViewToggle>
      </ViewToggles>
    </StatusBar>
  </Window>
);

const Page = () => (
  <PageFrame>
    <PageBody>
      <Card>
        <List>
          <Bullet $first $plain>
            <List $nested>
              <Bullet $first>
                <Line $width={831}><span>The</span><span>more</span></Line>
                ro
              </Bullet>
            </List>
          </Bullet>
          <Bullet>
            Manual
            <List $nested>
              <Bullet>
                <Line $width={821}><span>The</span><span>then</span></Line>
                ne
              </Bullet>
            </List>
          </Bullet>
          <Bullet>
            New S
            <List $nested>
              <Bullet>
                <Line $width={802}><span>Ad</span><span>n</span></Line>
                so
              </Bullet>
            </List>
          </Bullet>
        </List>
        <Divider />
        <Section>
          <SectionTitle>Assets</SectionTitle>
          <AssetBox>
            {ASSETS.map(({ name, Icon }, i) => (
              <AssetRow key={name} $first={i === 0}>
                <AssetName><Icon size={16} strokeWidth={1.4} />{name}</AssetName>
                <AssetDate>Jul 23</AssetDate>
              </AssetRow>
            ))}
          </AssetBox>
          <ReactionRow>
            <ReactionPill><ThumbIcon />7</ReactionPill>
            7 people reacted
          </ReactionRow>
        </Section>
      </Card>
      <Footer>
        <FooterLogo><FaGithub size={24} /></FooterLogo>
        © 2024 GitHub, Inc.
        {FOOTER_LINKS.map(([label, gap]) => (
          <Spaced key={label} $gap={gap}>{label}</Spaced>
        ))}
      </Footer>
    </PageBody>
    <PageScroll>
      <Arrow />
      <ScrollThumb />
      <Arrow $down />
    </PageScroll>
  </PageFrame>
);

const App = () => (
  <Shell>
    <GlobalStyle />
    <TabStrip>
      <ProfileSlot><ProfileIcon /></ProfileSlot>
      <TabActions><TabActionsIcon /></TabActions>
      <Tab>
        <FaGithub size={17} color="#222" />
        <TabTitle>Release v2.0.0 · tsgrgo/windows-</TabTitle>
        <X size={14} strokeWidth={1.5} />
      </Tab>
      <NewTab><Plus size={17} strokeWidth={1.2} /></NewTab>
      <BrowserControls>
        <BrowserControl><Minus size={13} strokeWidth={1} /></BrowserControl>
        <BrowserControl><Copy size={11} strokeWidth={1} /></BrowserControl>
        <BrowserControl><X size={14} strokeWidth={1} /></BrowserControl>
      </BrowserControls>
    </TabStrip>
    <Toolbar>
      <ToolButton $w={56}><ArrowLeft size={19} strokeWidth={1.2} /></ToolButton>
      <ToolButton $w={32}><RotateCw size={17} strokeWidth={1.2} /></ToolButton>
      <AddressBar>
        <Lock size={14} strokeWidth={1.2} />
        <Url>https://<b>github.com</b>/tsgrgo/windows-update-disabler/releases/tag/v...</Url>
        <AddressActions>
          <ToolButton $w={40} $color="#8a8a8a"><SplitAddIcon /></ToolButton>
          <ToolButton $w={40} $color="#8a8a8a"><ReadAloudIcon /></ToolButton>
          <ToolButton $w={40} $color="#8a8a8a"><Star size={17} strokeWidth={1.2} /></ToolButton>
        </AddressActions>
      </AddressBar>
      <ToolGroup>
        <ToolButton $w={44}><Columns2 size={16} strokeWidth={1.2} /></ToolButton>
        <ToolButton $w={46}><FavoritesIcon /></ToolButton>
        <ToolButton $w={45}><CollectionsIcon /></ToolButton>
        <ToolButton $w={39} $active><Download size={18} strokeWidth={1.2} /></ToolButton>
        <ToolButton $w={50}><HealthIcon /></ToolButton>
        <ToolButton $w={38}><MoreHorizontal size={18} strokeWidth={2} /></ToolButton>
        <ToolButton $w={46}><CopilotIcon /></ToolButton>
      </ToolGroup>
    </Toolbar>
    <Page />
    <Taskbar>
      <StartButton><FaWindows size={17} /></StartButton>
      <TaskSearch>
        <MirroredSearch size={18} strokeWidth={1.2} />
        Type here to search
      </TaskSearch>
      <TaskSlot><TaskViewIcon /></TaskSlot>
      <TaskSlot $running><EdgeIcon /></TaskSlot>
      <TaskSlot $active $running><ExplorerIcon /></TaskSlot>
      <TaskSlot><StoreIcon /></TaskSlot>
      <TaskSlot><MailIcon /></TaskSlot>
      <Tray>
        <NewsSlot><NewsIcon /></NewsSlot>
        <TraySlot><ChevronUp size={16} strokeWidth={1.4} /></TraySlot>
        <TraySlot><RemoteIcon /></TraySlot>
        <TraySlot><NetworkTrayIcon /></TraySlot>
        <TraySlot><VolumeIcon /></TraySlot>
        <Clock>
          <span>8:05 AM</span>
          <span>10/24/2024</span>
        </Clock>
        <NotifySlot><BubbleIcon /></NotifySlot>
        <ShowDesktop />
      </Tray>
    </Taskbar>
    <DownloadPopup />
    <Explorer />
    <Cursor width="18" height="32" viewBox="0 0 18 32">
      <path d="M1 1v21l5-4 4 9 4-2-4-8h7z" fill="#fff" stroke="#111" strokeWidth="1.200" />
    </Cursor>
  </Shell>
);

export default App;
